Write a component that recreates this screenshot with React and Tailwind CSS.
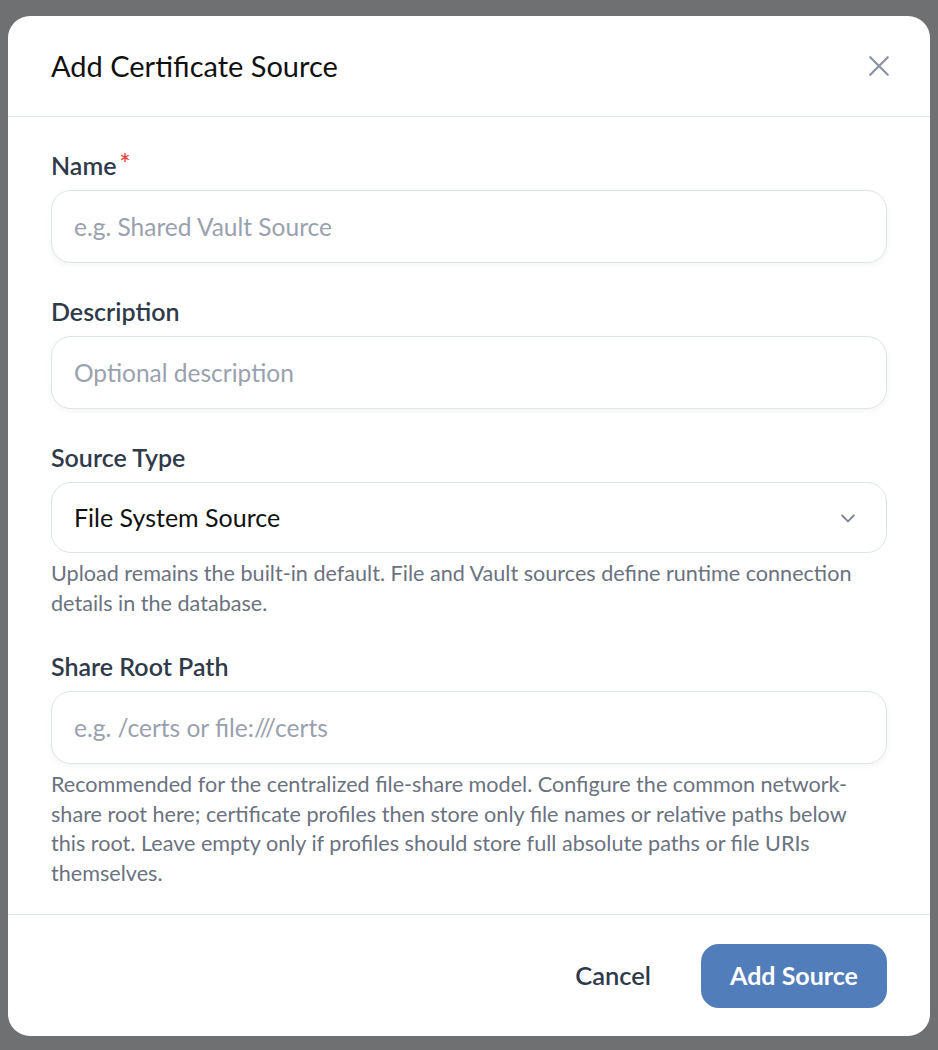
import React, { useState } from "react";

const font = { fontFamily: "Lato, 'Open Sans', sans-serif" };

function Field({ label, required, children, hint }) {
  return (
    <div className="flex flex-col">
      <label className="text-[25px] leading-[30px] font-semibold text-[#2f3a4b] mb-[10px] flex items-start">
        {label}
        {required && <span className="text-[#ef4444] ml-[3px] text-[26px] leading-[26px]">*</span>}
      </label>
      {children}
      {hint && (
        <p className="mt-[6px] max-w-[808px] text-[21.6px] leading-[29.5px] text-[#6b7280]">{hint}</p>
      )}
    </div>
  );
}

function TextInput({ placeholder }) {
  return (
    <input
      type="text"
      placeholder={placeholder}
      className="h-[73px] w-full rounded-[20px] border border-[#dde5e5] bg-white px-[22px] text-[24.5px] text-gray-900 placeholder:text-[#9aa1ae] shadow-[0_2px_6px_rgba(0,0,0,0.05)] outline-none"
    />
  );
}

export default function App() {
  const [sourceType] = useState("File System Source");

  return (
    <div className="min-h-[1050px] w-full bg-[#6f7071] pt-[16px] pl-[8px] pr-[8px]" style={font}>
      <div className="w-[922px] rounded-[22px] bg-white overflow-hidden">
        {/* Header */}
        <div className="flex items-center justify-between h-[101px] pl-[43px] pr-[36px] border-b border-[#dfe6e6]">
          <h2 className="text-[29px] text-[#111111] font-normal">Add Certificate Source</h2>
          <button className="text-[#8a93a3]">
            <svg width="30" height="30" viewBox="0 0 24 24" fill="none" stroke="currentColor" strokeWidth="1.8" strokeLinecap="round">
              <path d="M5 5l14 14M19 5L5 19" />
            </svg>
          </button>
        </div>

        {/* Body */}
        <div className="flex flex-col gap-[33px] px-[43px] pt-[33px] pb-[26px]">
          <Field label="Name" required>
            <TextInput placeholder="e.g. Shared Vault Source" />
          </Field>
          <Field label="Description">
            <TextInput placeholder="Optional description" />
          </Field>
          <Field
            label="Source Type"
            hint="Upload remains the built-in default. File and Vault sources define runtime connection details in the database."
          >
            <div className="h-[71px] w-full rounded-[20px] border border-[#dde5e5] bg-white px-[22px] flex items-center justify-between">
              <span className="text-[25px] text-[#111111]">{sourceType}</span>
              <svg className="mr-[6px]" width="20" height="20" viewBox="0 0 24 24" fill="none" stroke="#7b8494" strokeWidth="2.2" strokeLinecap="round" strokeLinejoin="round">
                <path d="M5 9l7 7 7-7" />
              </svg>
            </div>
          </Field>
          <Field
            label="Share Root Path"
            hint="Recommended for the centralized file-share model. Configure the common network-share root here; certificate profiles then store only file names or relative paths below this root. Leave empty only if profiles should store full absolute paths or file URIs themselves."
          >
            <TextInput placeholder="e.g. /certs or file:///certs" />
          </Field>
        </div>

        {/* Footer */}
        <div className="flex items-center justify-end gap-[50px] border-t border-[#dfe6e6] h-[122px] px-[43px]">
          <button className="text-[25.5px] font-semibold text-[#2f3a4b]">Cancel</button>
          <button className="h-[64px] w-[186px] rounded-[18px] bg-[#527dbb] text-white text-[25px] font-bold">
            Add Source
          </button>
        </div>
      </div>
    </div>
  );
}
